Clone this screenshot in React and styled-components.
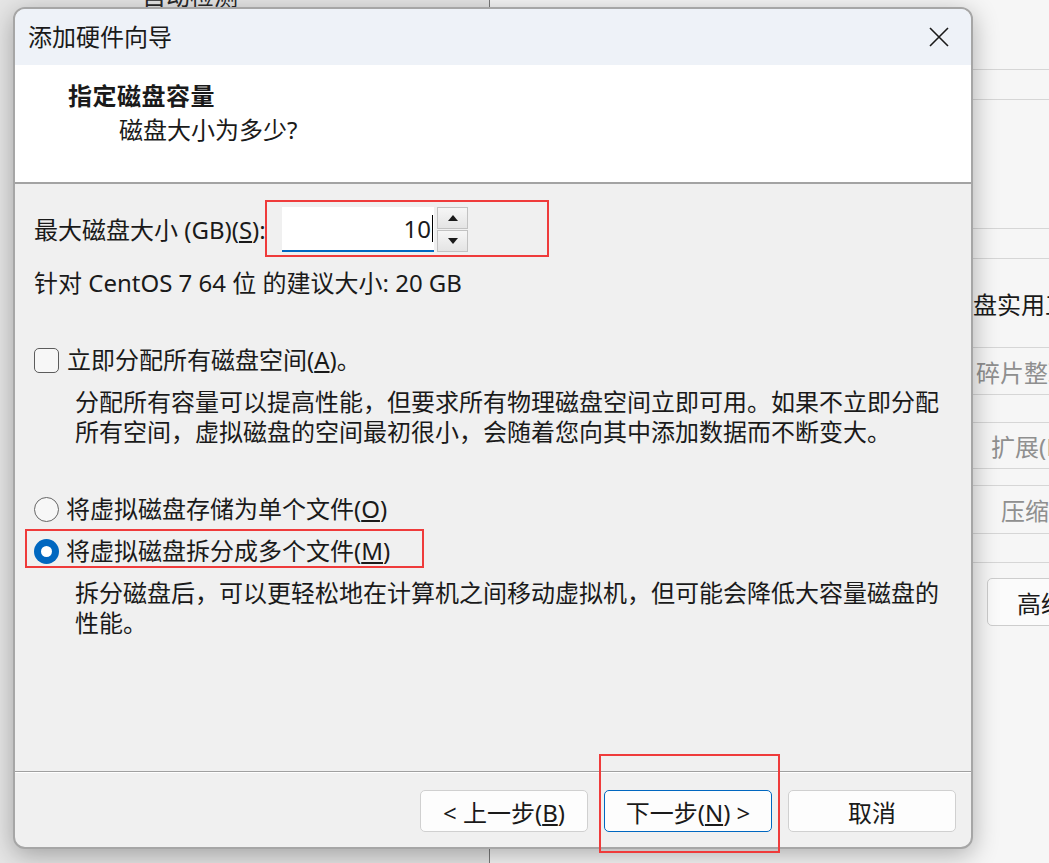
import React from 'react'
import styled, { createGlobalStyle } from 'styled-components'

const GlobalStyle = createGlobalStyle`
  * { box-sizing: border-box; }
  html, body { margin: 0; padding: 0; }
  body {
    width: 1049px;
    height: 863px;
    overflow: hidden;
    background: #e4e4e4;
    font-family: "Noto Sans", "Noto Sans CJK SC", sans-serif;
    color: #1a1a1a;
  }
`

// background window (the VM settings page behind the wizard)
const Desktop = styled.div`
  position: relative;
  display: flex;
  width: 1049px;
  height: 863px;
  overflow: hidden;
`

const BackLeft = styled.div`
  width: 490px;
  border-right: 1px solid #7a7a7a;
  background: #e6e6e6;
`

const PeekText = styled.div`
  margin-top: -19px;
  padding-left: 142px;
  font-size: 24px;
  line-height: 30px;
  color: #2a2a2a;
`

const BackRight = styled.div`
  flex: 1;
  display: flex;
  flex-direction: column;
  background: #f6f6f6;
  overflow: hidden;
`

const Band = styled.div`
  flex: none;
  height: ${p => p.$h}px;
  margin-top: ${p => p.$gap || 0}px;
  border-top: ${p => (p.$top ? '1px solid #d6d6d6' : 'none')};
  border-bottom: 1px solid #d6d6d6;
  display: flex;
  align-items: center;
  padding-left: ${p => p.$indent || 0}px;
  font-size: 24px;
  white-space: nowrap;
  color: ${p => (p.$muted ? '#8f8f8f' : '#1a1a1a')};
`

const BackButton = styled.div`
  flex: none;
  margin: 15px 0 0 497px;
  width: 200px;
  height: 48px;
  border: 1px solid #cdcdcd;
  border-radius: 5px;
  background: #fbfbfb;
  display: flex;
  align-items: center;
  padding-left: 29px;
  font-size: 24px;
  white-space: nowrap;
`

// wizard dialog
const Dialog = styled.section`
  position: absolute;
  left: 13px;
  top: 7px;
  width: 960px;
  height: 842px;
  border: 2px solid #a6a6a6;
  border-radius: 12px;
  background: #f0f0f0;
  box-shadow: 0 6px 26px rgba(0, 0, 0, 0.3);
  display: flex;
  flex-direction: column;
`

const TitleBar = styled.header`
  height: 56px;
  display: flex;
  align-items: center;
  justify-content: space-between;
  padding: 0 22px 0 13px;
  background: #eef2f8;
  border-radius: 10px 10px 0 0;
`

const Title = styled.h1`
  margin: 0;
  font-size: 24px;
  font-weight: 400;
  line-height: 30px;
`

const Banner = styled.div`
  height: 119px;
  background: #fff;
  border-bottom: 2px solid #a3a3a3;
  padding: 16px 0 0 53px;
`

const BannerTitle = styled.div`
  font-size: 24px;
  font-weight: 700;
  line-height: 30px;
  letter-spacing: 0.5px;
`

const BannerSub = styled.div`
  margin: 4px 0 0 51px;
  font-size: 24px;
  line-height: 30px;
`

const Body = styled.div`
  flex: 1;
  padding: 23px 0 0 19px;
  font-size: 24px;
  line-height: 30px;
`

const SizeRow = styled.div`
  display: flex;
  align-items: center;
  height: 45px;
`

const FieldLabel = styled.label`
  width: 248px;
  white-space: nowrap;
`

const SpinBox = styled.div`
  position: relative;
  display: flex;
  gap: 3px;
`

const NumberField = styled.div`
  width: 152px;
  height: 45px;
  background: #fff;
  border-bottom: 2px solid #0067c0;
  display: flex;
  align-items: center;
  justify-content: flex-end;
  padding-right: 1px;
  font-size: 24px;
`

const Caret = styled.span`
  width: 1px;
  height: 27px;
  margin-left: 1px;
  background: #000;
`

const SpinStack = styled.div`
  display: flex;
  flex-direction: column;
  gap: 1px;
`

const SpinButton = styled.div`
  width: 31px;
  height: 22px;
  border: 1px solid #c2c2c2;
  background: linear-gradient(#f6f6f6, #e4e4e4);
  display: flex;
  align-items: center;
  justify-content: center;
`

const Hint = styled.div`
  margin-top: 16px;
  white-space: nowrap;
`

const OptionRow = styled.div`
  position: relative;
  display: flex;
  align-items: center;
  gap: ${p => p.$gap || 8}px;
  margin-top: ${p => p.$mt}px;
  height: 30px;
  white-space: nowrap;
`

const CheckBox = styled.span`
  width: 25px;
  height: 25px;
  border: 1.5px solid #5c5c5c;
  border-radius: 5px;
  background: #f7f7f7;
`

const Radio = styled.span`
  width: 25px;
  height: 25px;
  border-radius: 50%;
  border: ${p => (p.$on ? 'none' : '1.5px solid #666')};
  background: ${p => (p.$on ? '#0067c0' : '#f7f7f7')};
  display: flex;
  align-items: center;
  justify-content: center;

  &::after {
    content: '';
    display: ${p => (p.$on ? 'block' : 'none')};
    width: 11px;
    height: 11px;
    border-radius: 50%;
    background: #fff;
  }
`

const Desc = styled.p`
  margin: 12px 0 0 41px;
  white-space: nowrap;
`

const Footer = styled.footer`
  height: 76px;
  border-top: 1px solid #a0a0a0;
  box-shadow: inset 0 1px 0 #fff;
  display: flex;
  justify-content: flex-end;
  gap: 16px;
  padding: 18px 15px 0 0;
`

const WizardButton = styled.button`
  position: relative;
  width: 168px;
  height: 42px;
  border: 1px solid ${p => (p.$primary ? '#0067c0' : '#d0d0d0')};
  border-radius: 5px;
  background: #fdfdfd;
  font-family: inherit;
  font-size: 24px;
  color: #1a1a1a;
  padding: 0;
`

// red annotation frames drawn over the screenshot
const Mark = styled.span`
  position: absolute;
  left: ${p => p.$l}px;
  top: ${p => p.$t}px;
  width: ${p => p.$w}px;
  height: ${p => p.$h}px;
  border: 2px solid #ef3b3b;
  pointer-events: none;
`

const Arrow = ({ up }) => (
  <svg width="10" height="6" viewBox="0 0 10 6">
    <polygon points={up ? '5,0 10,6 0,6' : '0,0 10,0 5,6'} fill="#1a1a1a" />
  </svg>
)

const CloseIcon = () => (
  <svg width="20" height="20" viewBox="0 0 20 20">
    <path d="M1 1 L19 19 M19 1 L1 19" stroke="#1a1a1a" strokeWidth="1.6" fill="none" />
  </svg>
)

export default function App() {
  return (
    <Desktop>
      <GlobalStyle />
      <BackLeft>
        <PeekText>自动检测</PeekText>
      </BackLeft>
      <BackRight>
        <Band $h={70} />
        <Band $h={30} />
        <Band $h={129} />
        <Band $h={30} />
        <Band $h={89} $indent={483}>盘实用工具</Band>
        <Band $h={47} $indent={486} $muted>碎片整理(D)</Band>
        <Band $h={47} $gap={27} $top $indent={501} $muted>扩展(E)...</Band>
        <Band $h={49} $gap={16} $top $indent={511} $muted>压缩(C)</Band>
        <Band $h={29} />
        <BackButton>高级(V)...</BackButton>
      </BackRight>

      <Dialog>
        <TitleBar>
          <Title>添加硬件向导</Title>
          <CloseIcon />
        </TitleBar>

        <Banner>
          <BannerTitle>指定磁盘容量</BannerTitle>
          <BannerSub>磁盘大小为多少?</BannerSub>
        </Banner>

        <Body>
          <SizeRow>
            <FieldLabel>最大磁盘大小 (GB)(<u>S</u>):</FieldLabel>
            <SpinBox>
              <Mark $l={-17} $t={-7} $w={284} $h={57} />
              <NumberField>
                10
                <Caret />
              </NumberField>
              <SpinStack>
                <SpinButton><Arrow up /></SpinButton>
                <SpinButton><Arrow /></SpinButton>
              </SpinStack>
            </SpinBox>
          </SizeRow>

          <Hint>针对 CentOS 7 64 位 的建议大小: 20 GB</Hint>

          <OptionRow $mt={47} $gap={8}>
            <CheckBox />
            <span>立即分配所有磁盘空间(<u>A</u>)。</span>
          </OptionRow>
          <Desc>
            分配所有容量可以提高性能，但要求所有物理磁盘空间立即可用。如果不立即分配
            <br />
            所有空间，虚拟磁盘的空间最初很小，会随着您向其中添加数据而不断变大。
          </Desc>

          <OptionRow $mt={47} $gap={7}>
            <Radio />
            <span>将虚拟磁盘存储为单个文件(<u>O</u>)</span>
          </OptionRow>
          <OptionRow $mt={12} $gap={7}>
            <Mark $l={-9} $t={-7} $w={399} $h={39} />
            <Radio $on />
            <span>将虚拟磁盘拆分成多个文件(<u>M</u>)</span>
          </OptionRow>
          <Desc>
            拆分磁盘后，可以更轻松地在计算机之间移动虚拟机，但可能会降低大容量磁盘的
            <br />
            性能。
          </Desc>
        </Body>

        <Footer>
          <WizardButton>&lt; 上一步(<u>B</u>)</WizardButton>
          <WizardButton $primary>
            下一步(<u>N</u>) &gt;
            <Mark $l={-6} $t={-37} $w={181} $h={99} />
          </WizardButton>
          <WizardButton>取消</WizardButton>
        </Footer>
      </Dialog>
    </Desktop>
  )
}
